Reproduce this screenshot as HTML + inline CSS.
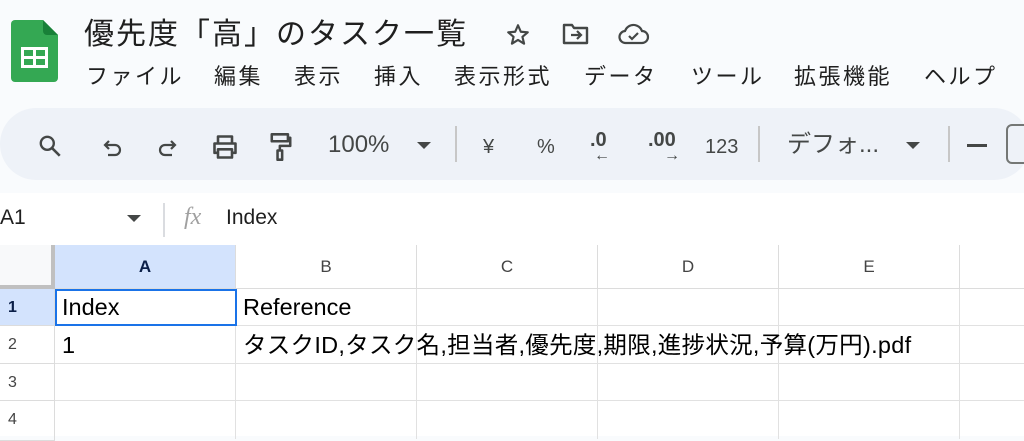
<!DOCTYPE html>
<html><head><meta charset="utf-8"><style>
*{margin:0;padding:0;box-sizing:border-box}
body{width:1024px;height:436px;overflow:hidden;background:#f9fbfd;font-family:"Liberation Sans","Noto Sans CJK JP",sans-serif;color:#1f1f1f;position:relative}
.a{position:absolute;white-space:nowrap}
.title{left:84px;top:15px;font-size:30px;letter-spacing:2px;line-height:40px}
.menu{top:62px;font-size:22px;letter-spacing:2.5px;line-height:30px}
.tb{left:0;top:108px;width:1030px;height:72px;background:#eef2f8;border-radius:36px}
.ti{font-size:24px;color:#444746;top:131px;line-height:28px}
.sep{width:2px;height:36px;background:#c7c7c7;top:126px}
.fb{left:0;top:193px;width:1024px;height:52px;background:#fff}
.grid{left:0;top:245px;width:1024px;height:191px;background:#fff}
.h{position:absolute;border-right:1px solid #dcdcdc;border-bottom:1px solid #dcdcdc}
.cell{font-size:23.5px;color:#000;line-height:26px}
</style></head><body>
<svg class="a" style="left:11px;top:20px" width="47" height="62" viewBox="0 0 47 62"><path d="M4 0h28l15 15v43a4 4 0 0 1-4 4H4a4 4 0 0 1-4-4V4a4 4 0 0 1 4-4z" fill="#34a853"/><path d="M32 0l15 15H36a4 4 0 0 1-4-4z" fill="#188038"/><rect x="10" y="27" width="27" height="21" fill="#fff"/><rect x="13" y="30" width="9" height="6" fill="#34a853"/><rect x="25" y="30" width="9" height="6" fill="#34a853"/><rect x="13" y="39" width="9" height="6" fill="#34a853"/><rect x="25" y="39" width="9" height="6" fill="#34a853"/></svg>
<div class="a title">優先度「高」のタスク一覧</div>
<svg class="a" style="left:505px;top:22px" width="26" height="26" viewBox="0 0 24 24"><path d="M12 3l2.6 6 6.4.5-4.9 4.2 1.5 6.3L12 16.6 6.4 20l1.5-6.3L3 9.5 9.4 9z" fill="none" stroke="#444746" stroke-width="2" stroke-linejoin="round"/></svg>
<svg class="a" style="left:562px;top:22px" width="28" height="24" viewBox="0 0 28 24"><path d="M2 3h8l2 3h13v15H2z" fill="none" stroke="#444746" stroke-width="2.4" stroke-linejoin="round"/><path d="M9 13h10M15 9l4 4-4 4" fill="none" stroke="#444746" stroke-width="2.2"/></svg>
<svg class="a" style="left:617px;top:22px" width="34" height="24" viewBox="0 0 34 24"><path d="M9 21a6 6 0 0 1-1-12 9 9 0 0 1 17 0 6 6 0 0 1 0 12z" fill="none" stroke="#444746" stroke-width="2.2"/><path d="M12 14l3 3 6-6" fill="none" stroke="#444746" stroke-width="2.2"/></svg>
<div class="a menu" style="left:86px">ファイル</div>
<div class="a menu" style="left:214px">編集</div>
<div class="a menu" style="left:294px">表示</div>
<div class="a menu" style="left:374px">挿入</div>
<div class="a menu" style="left:454px">表示形式</div>
<div class="a menu" style="left:584px">データ</div>
<div class="a menu" style="left:691px">ツール</div>
<div class="a menu" style="left:794px">拡張機能</div>
<div class="a menu" style="left:924px">ヘルプ</div>
<div class="a tb"></div>
<svg class="a" style="left:37px;top:133px" width="26" height="26" viewBox="0 0 24 24"><circle cx="9.5" cy="9.5" r="6" fill="none" stroke="#444746" stroke-width="2.2"/><path d="M14 14l7 7" stroke="#444746" stroke-width="2.4"/></svg>
<svg class="a" style="left:100px;top:136px" width="24" height="24" viewBox="0 0 24 24"><path d="M5 9h10a5 5 0 0 1 0 10H8M9 5L5 9l4 4" fill="none" stroke="#444746" stroke-width="2.2"/></svg>
<svg class="a" style="left:156px;top:136px" width="24" height="24" viewBox="0 0 24 24"><path d="M19 9H9a5 5 0 0 0 0 10h7M15 5l4 4-4 4" fill="none" stroke="#444746" stroke-width="2.2"/></svg>
<svg class="a" style="left:211px;top:133px" width="28" height="28" viewBox="0 0 24 24"><path d="M6 8V3h12v5M6 17H3V9h18v8h-3M6 14h12v7H6z" fill="none" stroke="#444746" stroke-width="2.2" stroke-linejoin="round"/></svg>
<svg class="a" style="left:269px;top:132px" width="24" height="30" viewBox="0 0 20 26"><path d="M2 2h14v6H2zM16 5h2v7H9v4M7 16h4v8H7z" fill="none" stroke="#444746" stroke-width="2.2" stroke-linejoin="round"/></svg>
<div class="a ti" style="left:328px">100%</div>
<svg class="a" style="left:416px;top:141px" width="16" height="10"><path d="M1 1h14l-7 7z" fill="#444746"/></svg>
<div class="a sep" style="left:455px"></div>
<div class="a ti" style="left:483px;font-size:20px;top:133px">¥</div>
<div class="a ti" style="left:537px;font-size:20px;top:133px">%</div>
<div class="a ti" style="left:590px;font-size:20px;top:126px;font-weight:bold">.0</div>
<div class="a ti" style="left:594px;font-size:16px;top:142px;font-weight:bold">←</div>
<div class="a ti" style="left:648px;font-size:20px;top:126px;font-weight:bold">.00</div>
<div class="a ti" style="left:664px;font-size:16px;top:142px;font-weight:bold">→</div>
<div class="a ti" style="left:705px;font-size:20px;top:133px">123</div>
<div class="a sep" style="left:758px"></div>
<div class="a ti" style="left:787px">デフォ...</div>
<svg class="a" style="left:905px;top:141px" width="16" height="10"><path d="M1 1h14l-7 7z" fill="#444746"/></svg>
<div class="a sep" style="left:948px"></div>
<div class="a" style="left:967px;top:144px;width:20px;height:3px;background:#444746"></div>
<div class="a" style="left:1006px;top:124px;width:30px;height:40px;border:2px solid #747775;border-radius:6px"></div>
<div class="a fb"></div>
<div class="a" style="left:0;top:206px;font-size:21px">A1</div>
<svg class="a" style="left:126px;top:214px" width="16" height="10"><path d="M1 1h14l-7 7z" fill="#444746"/></svg>
<div class="a" style="left:163px;top:203px;width:2px;height:34px;background:#dadce0"></div>
<div class="a" style="left:184px;top:204px;font-size:24px;font-style:italic;color:#a0a0a0;font-family:'Liberation Serif',serif">fx</div>
<div class="a" style="left:226px;top:206px;font-size:21px">Index</div>
<div class="a grid">
<div class="h" style="left:0;top:0;width:55px;height:44px;background:#f8f9fa;border-right:4px solid #c0c0c0;border-bottom:4px solid #c0c0c0"></div>
<div class="h" style="left:55px;top:0;width:181px;height:44px;background:#d3e3fd;text-align:center;line-height:44px;font-weight:bold;font-size:17px;color:#0b1f48">A</div>
<div class="h" style="left:236px;top:0;width:181px;height:44px;background:#fff;text-align:center;line-height:44px;font-size:17px;color:#444">B</div>
<div class="h" style="left:417px;top:0;width:181px;height:44px;text-align:center;line-height:44px;font-size:17px;color:#444">C</div>
<div class="h" style="left:598px;top:0;width:181px;height:44px;text-align:center;line-height:44px;font-size:17px;color:#444">D</div>
<div class="h" style="left:779px;top:0;width:181px;height:44px;text-align:center;line-height:44px;font-size:17px;color:#444">E</div>
<div class="h" style="left:960px;top:0;width:70px;height:44px"></div>
<div class="h" style="left:0;top:44px;width:55px;height:37px;background:#d3e3fd;font-weight:bold;font-size:16px;line-height:37px;padding-left:8px;color:#0b1f48">1</div>
<div class="h" style="left:0;top:81px;width:55px;height:38px;font-size:16px;line-height:38px;padding-left:8px;color:#444">2</div>
<div class="h" style="left:0;top:119px;width:55px;height:37px;font-size:16px;line-height:37px;padding-left:8px;color:#444">3</div>
<div class="h" style="left:0;top:156px;width:55px;height:40px;font-size:16px;line-height:37px;padding-left:8px;color:#444">4</div>
<div class="a" style="left:55px;top:44px;width:980px;height:150px;background:
repeating-linear-gradient(90deg,transparent 0 180px,#e1e1e1 180px 181px)"></div>
<div class="a" style="left:55px;top:80px;width:980px;height:1px;background:#e1e1e1"></div>
<div class="a" style="left:55px;top:118px;width:980px;height:1px;background:#e1e1e1"></div>
<div class="a" style="left:55px;top:155px;width:980px;height:1px;background:#e1e1e1"></div>
<div class="a" style="left:55px;top:44px;width:182px;height:37px;border:2px solid #1a73e8"></div>
<div class="a cell" style="left:62px;top:49px">Index</div>
<div class="a cell" style="left:243px;top:49px">Reference</div>
<div class="a cell" style="left:62px;top:87px">1</div>
<div class="a cell" style="left:243px;top:87px;letter-spacing:0.28px">タスクID,タスク名,担当者,優先度,期限,進捗状況,予算(万円).pdf</div>
</div>
</body></html>
